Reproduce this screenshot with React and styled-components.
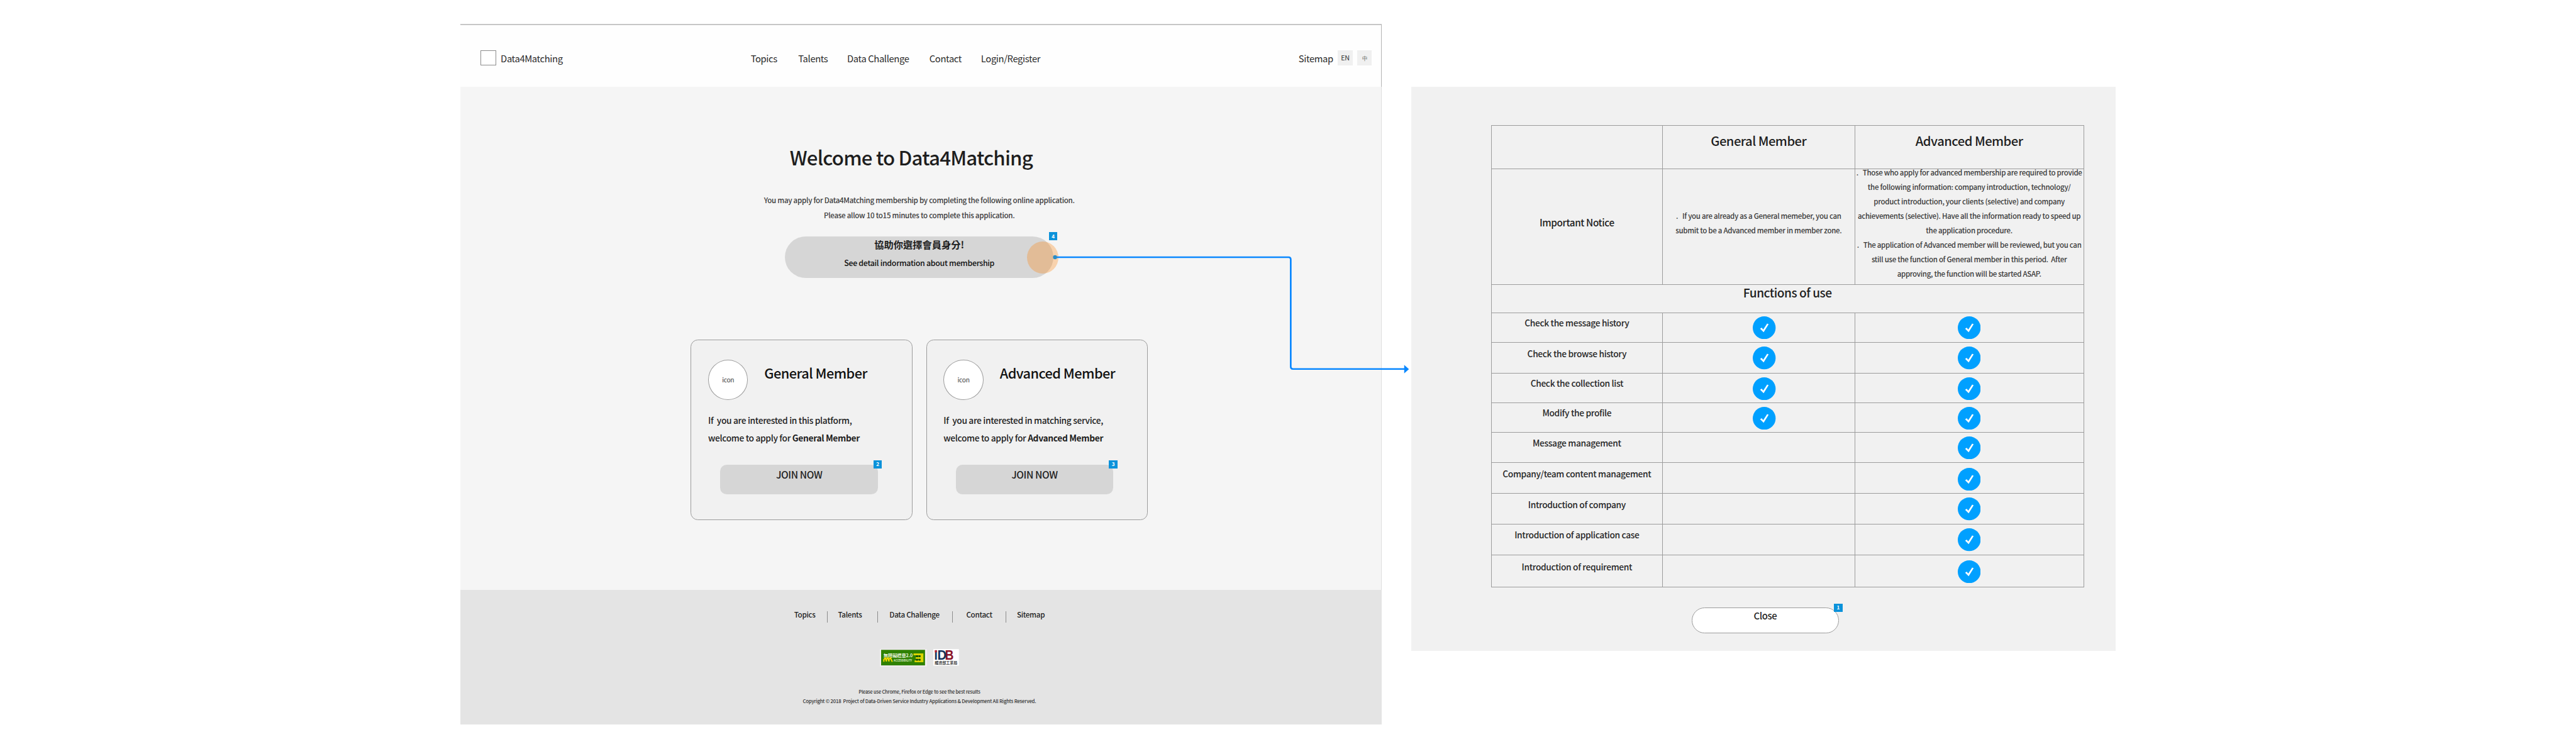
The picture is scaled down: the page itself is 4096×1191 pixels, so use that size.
import React from "react";
import styled, { createGlobalStyle } from "styled-components";

// Design units are scaled once, here, to the size of the board.
const SCALE = 0.58198;
const u = (n) => `${+(n * SCALE).toFixed(2)}px`;

const color = {
  ink: "#1e1e1e",
  soft: "#3c3c3c",
  line: "#9c9c9c",
  button: "#d6d6d6",
  badge: "#0b92da",
  check: "#00a0ff",
  flow: "#0a88ff",
};

const GlobalStyle = createGlobalStyle`
  *, *::before, *::after { box-sizing: border-box; letter-spacing: -0.025em; }
  svg text { letter-spacing: 0; }
  body {
    margin: 0;
    background: #fff;
    font-family: "Noto Sans CJK TC", "Open Sans", sans-serif;
    color: ${color.ink};
  }
  p, h1, h2, h3 { margin: 0; font-weight: inherit; }
`;

const Board = styled.div`
  position: relative;
  display: flex;
  align-items: flex-start;
  width: 4096px;
  height: 1191px;
  padding-left: ${u(1258)};
  overflow: hidden;
`;

/* ---------- page frame ---------- */

const Page = styled.div`
  display: flex;
  flex-direction: column;
  flex: none;
  width: ${u(2517)};
  height: ${u(1914)};
  margin-top: ${u(66)};
`;

const Header = styled.header`
  display: flex;
  align-items: center;
  flex: none;
  height: ${u(171)};
  padding: ${u(10)} ${u(25)} 0 ${u(55)};
  border-top: 2px solid #c6c6c6;
  border-right: 1px solid #b4b4b4;
  background: #fefefe;
  font-size: ${u(25.4)};
  color: #2a2a2a;
  white-space: nowrap;
`;

const Brand = styled.div`
  display: flex;
  align-items: center;
  gap: ${u(12)};
  width: ${u(738)};
`;

const LogoBox = styled.span`
  width: ${u(43)};
  height: ${u(42)};
  border: 1px solid #8c8c8c;
  background: #fff;
`;

const Nav = styled.nav`
  display: flex;
`;

const NavLink = styled.span`
  width: ${(p) => u(p.$slot)};
`;

const Tools = styled.div`
  display: flex;
  align-items: center;
  gap: ${u(13)};
  margin-left: auto;
`;

const Chip = styled.span`
  display: flex;
  align-items: center;
  justify-content: center;
  width: ${u(40)};
  height: ${u(41)};
  background: #f0f0f0;
  font-size: ${(p) => u(p.$size)};
  color: ${(p) => p.$tone};
  line-height: 1;
`;

const Main = styled.main`
  display: flex;
  flex-direction: column;
  align-items: center;
  flex: none;
  height: ${u(1375)};
  padding: ${u(158.5)} ${u(8)} 0 0;
  border-right: 1px solid #dedede;
  background: #f5f5f5;
  white-space: pre;
`;

const Title = styled.h1`
  padding-right: ${u(44)};
  font-size: ${u(53.6)};
  font-weight: 500;
  line-height: ${u(70)};
`;

const Lead = styled.p`
  margin-top: ${u(62.8)};
  font-size: ${u(19.9)};
  font-weight: 500;
  line-height: ${u(40.3)};
  text-align: center;
  color: ${color.soft};
`;

const Pill = styled.div`
  position: relative;
  display: flex;
  flex-direction: column;
  align-items: center;
  gap: ${u(10.4)};
  width: ${u(733.5)};
  height: ${u(113.3)};
  margin-top: ${u(37.3)};
  padding-top: ${u(2)};
  border-radius: ${u(57)};
  background: ${color.button};
`;

const PillTitle = styled.span`
  font-size: ${u(26.2)};
  font-weight: 700;
  letter-spacing: 0;
  line-height: ${u(40)};
`;

const PillText = styled.span`
  font-size: ${u(21.3)};
  font-weight: 500;
  line-height: ${u(40)};
  color: #111;
`;

const Hotspot = styled.span`
  position: absolute;
  top: ${u(13)};
  left: ${u(661)};
  width: ${u(86)};
  height: ${u(88)};
  border-radius: 50%;
  background: rgba(255, 130, 7, 0.3);
`;

const Badge = styled.span`
  position: absolute;
  top: ${(p) => u(p.$top)};
  right: ${(p) => u(p.$right)};
  display: flex;
  align-items: center;
  justify-content: center;
  width: ${u(22.7)};
  height: ${u(22.7)};
  background: ${color.badge};
  color: #fff;
  font-size: ${u(14)};
  font-weight: 700;
  line-height: 1;
  letter-spacing: 0;
`;

const Cards = styled.div`
  display: flex;
  gap: ${u(37.8)};
  margin-top: ${u(168.2)};
`;

const Card = styled.section`
  width: ${u(605.4)};
  height: ${u(493.7)};
  padding: ${u(53)} 0 0 ${u(45.8)};
  border: 1px solid ${color.line};
  border-radius: ${u(20)};
  background: #f1f1f1;
`;

const CardHead = styled.div`
  display: flex;
  align-items: flex-start;
  gap: ${u(44.5)};
`;

const IconCircle = styled.span`
  display: flex;
  align-items: center;
  justify-content: center;
  width: ${u(109)};
  height: ${u(110)};
  border: 1px solid ${color.line};
  border-radius: 50%;
  background: #fff;
  font-size: ${u(17.5)};
  color: ${color.soft};
`;

const CardTitle = styled.h2`
  margin-top: ${u(11)};
  font-size: ${u(37.3)};
  font-weight: 500;
  line-height: ${u(50)};
  color: #111;
`;

const CardText = styled.p`
  margin-top: ${u(33.9)};
  font-size: ${u(23.7)};
  font-weight: 500;
  line-height: ${u(46.8)};
`;

const JoinButton = styled.div`
  position: relative;
  width: ${u(431)};
  height: ${u(81.2)};
  margin: ${u(50)} 0 0 ${u(33)};
  padding-top: ${u(7.7)};
  border-radius: ${u(18)};
  background: ${color.button};
  font-size: ${u(26.6)};
  font-weight: 500;
  line-height: ${u(40)};
  text-align: center;
`;

/* ---------- footer ---------- */

const Footer = styled.footer`
  display: flex;
  flex-direction: column;
  align-items: center;
  flex: none;
  height: ${u(368)};
  padding: ${u(51)} ${u(9)} 0 0;
  background: #e4e4e4;
  white-space: pre;
`;

const FooterLinks = styled.div`
  display: flex;
  height: ${u(38)};
  font-size: ${u(20)};
  font-weight: 500;
  line-height: ${u(30)};
`;

const Divider = styled.span`
  width: 1px;
  height: ${u(30)};
  margin: ${u(8)} ${(p) => u(p.$after)} 0 ${(p) => u(p.$before)};
  background: #8c8c8c;
`;

const Logos = styled.div`
  display: flex;
  align-items: flex-start;
  gap: ${u(17.5)};
  height: ${u(48)};
  margin-top: ${u(71.5)};
`;

const LogoArt = styled.svg`
  display: block;
  width: ${(p) => u(p.$w)};
  height: ${(p) => u(p.$h)};
  overflow: visible;
`;

const Legal = styled.p`
  margin-top: ${(p) => u(p.$gap)};
  font-size: ${(p) => u(p.$size)};
  font-weight: 500;
  line-height: ${u(26.7)};
  color: #333;
`;

/* ---------- comparison panel ---------- */

const Panel = styled.aside`
  flex: none;
  width: ${u(1924)};
  height: ${u(1541)};
  margin: ${u(237)} 0 0 ${u(81)};
  padding: ${u(105)} 0 0 ${u(217.5)};
  background: #f1f1f1;
  white-space: pre;
`;

const Table = styled.div`
  width: ${u(1620.5)};
  border-top: 1px solid ${color.line};
  border-left: 1px solid ${color.line};
`;

const Row = styled.div`
  display: grid;
  grid-template-columns: ${(p) => (p.$full ? "1fr" : `${u(468)} ${u(525)} 1fr`)};
  height: ${(p) => u(p.$h)};
`;

const Cell = styled.div`
  display: flex;
  justify-content: center;
  align-items: ${(p) => (p.$middle ? "center" : "flex-start")};
  min-width: 0;
  min-height: 0;
  padding: ${(p) => u(p.$top || 0)} 0 ${(p) => u(p.$bottom || 0)} ${(p) => u(p.$left || 0)};
  border-right: 1px solid ${color.line};
  border-bottom: 1px solid ${color.line};
`;

const HeadText = styled.h3`
  font-size: ${(p) => u(p.$size)};
  font-weight: 500;
  line-height: ${(p) => u(p.$line)};
`;

const NoticeLabel = styled.span`
  font-size: ${u(26.3)};
  font-weight: 500;
  line-height: ${u(40)};
`;

const NoticeText = styled.p`
  font-size: ${u(19.7)};
  font-weight: 500;
  line-height: ${u(39.4)};
  text-align: center;
  color: #3a3a3a;
`;

const RowLabel = styled.span`
  font-size: ${u(23.7)};
  font-weight: 500;
  line-height: ${u(40)};
  color: #282828;
`;

const CheckArt = styled.svg`
  display: block;
  width: ${u(62.5)};
  height: ${u(62.5)};
`;

const CloseButton = styled.div`
  position: relative;
  width: ${u(403)};
  height: ${u(70)};
  margin: ${u(55.6)} 0 0 ${u(548)};
  border: 1px solid ${color.line};
  border-radius: ${u(35)};
  background: #fff;
  font-size: ${u(25.5)};
  font-weight: 500;
  line-height: ${u(42)};
  text-align: center;
`;

const FlowLine = styled.svg`
  position: absolute;
  top: ${u(640)};
  left: ${u(2870)};
  width: ${u(1000)};
  height: ${u(400)};
  pointer-events: none;
`;

/* ---------- data ---------- */

const NAV = [
  ["Topics", 130.1],
  ["Talents", 133.5],
  ["Data Challenge", 224.7],
  ["Contact", 141],
  ["Login/Register", 170],
];

const CARDS = [
  { name: "General Member", line: "If  you are interested in this platform,", badge: "2" },
  { name: "Advanced Member", line: "If  you are interested in matching service,", badge: "3" },
];

const NOTICE_GENERAL = [
  ".   If you are already as a General memeber, you can",
  "submit to be a Advanced member in member zone.",
];

const NOTICE_ADVANCED = [
  ".   Those who apply for advanced membership are required to provide",
  "the following information: company introduction, technology/",
  "product introduction, your clients (selective) and company",
  "achievements (selective). Have all the information ready to speed up",
  "the application procedure.",
  ".   The application of Advanced member will be reviewed, but you can",
  "still use the function of General member in this period.  After",
  "approving, the function will be started ASAP.",
];

const FEATURES = [
  { label: "Check the message history", h: 81, text: 7.7, mark: 8.2, general: true },
  { label: "Check the browse history", h: 84, text: 10.5, mark: 11.1, general: true },
  { label: "Check the collection list", h: 80.7, text: 7, mark: 9.8, general: true },
  { label: "Modify the profile", h: 80.3, text: 7.4, mark: 10.6, general: true },
  { label: "Message management", h: 84, text: 9.7, mark: 10.3 },
  { label: "Company/team content management", h: 84, text: 9.4, mark: 13.2 },
  { label: "Introduction of company", h: 83, text: 9, mark: 10.4 },
  { label: "Introduction of application case", h: 84.5, text: 8.7, mark: 11.8 },
  { label: "Introduction of requirement", h: 87.3, text: 12.6, mark: 14.2 },
];

const Check = () => (
  <CheckArt viewBox="0 0 62 62">
    <circle cx="31" cy="31" r="31" fill={color.check} />
    <path d="M20 33.5 L24 30.5 L28.5 36 L39 19.5 L43 21.5 L29.5 43 Z" fill="#fff" />
  </CheckArt>
);

const AccessLogo = () => (
  <LogoArt $w={128.5} $h={48} viewBox="0 0 128.5 48">
    <rect width="128.5" height="48" fill="#f3eef2" />
    <rect x="3.5" y="2.2" width="120" height="42.6" fill="#2f8102" />
    <text x="10" y="21.5" fontSize="12.5" fontWeight="700" fill="#e4f0dc" textLength="80">無障礙標章2.0</text>
    <path d="M11 35 V29 L15 24 L18 34 V28 L22 24 L25 34 V28 L29 24 L34 35" fill="none" stroke="#f5d800" strokeWidth="3.4" />
    <text x="38" y="34.5" fontSize="9" fontWeight="700" fill="#dcebd2" textLength="50" lengthAdjust="spacingAndGlyphs">ACCESSIBILITY</text>
    <path d="M92 12 H119 V36 H95 V31 H111 V27 H98 V22 H111 V17 H92 Z" fill="#d9d400" />
    <path d="M99 17 h5 v5 h-5z M99 27 h5 v5 h-5z M107 17 h4 v5 h-4z M107 27 h4 v5 h-4z" fill="#12400a" />
  </LogoArt>
);

const IdbLogo = () => (
  <LogoArt $w={70} $h={45.5} viewBox="0 0 70 45.5">
    <rect width="70" height="45.5" fill="#fdfdfd" />
    <g fontFamily="Liberation Sans, sans-serif" fontWeight="700" fontSize="36.5">
      <text x="2.5" y="29.3" fill="#14335c" textLength="9" lengthAdjust="spacingAndGlyphs">I</text>
      <text x="32" y="29.3" fill="#8a1228" textLength="24" lengthAdjust="spacingAndGlyphs">B</text>
      <text x="11" y="29.3" fill="#14335c" textLength="25" lengthAdjust="spacingAndGlyphs">D</text>
    </g>
    <rect x="4.3" y="3.2" width="5.6" height="6" fill="#b01c30" />
    <text x="4" y="41.5" fontSize="10.3" fontWeight="700" fill="#333">經濟部工業局</text>
  </LogoArt>
);

export default function App() {
  return (
    <>
      <GlobalStyle />
      <Board>
        <Page>
          <Header>
            <Brand>
              <LogoBox />
              Data4Matching
            </Brand>
            <Nav>
              {NAV.map(([label, slot]) => (
                <NavLink key={label} $slot={slot}>{label}</NavLink>
              ))}
            </Nav>
            <Tools>
              Sitemap
              <Chip $size={18.5} $tone="#333">EN</Chip>
              <Chip $size={14.5} $tone="#666">中</Chip>
            </Tools>
          </Header>

          <Main>
            <Title>Welcome to Data4Matching</Title>
            <Lead>
              You may apply for Data4Matching membership by completing the following online application.
              <br />
              Please allow 10 to15 minutes to complete this application.
            </Lead>
            <Pill>
              <PillTitle>協助你選擇會員身分!</PillTitle>
              <PillText>See detail indormation about membership</PillText>
              <Hotspot />
              <Badge $top={-12} $right={-10.5}>4</Badge>
            </Pill>
            <Cards>
              {CARDS.map((card) => (
                <Card key={card.name}>
                  <CardHead>
                    <IconCircle>icon</IconCircle>
                    <CardTitle>{card.name}</CardTitle>
                  </CardHead>
                  <CardText>
                    {card.line}
                    <br />
                    welcome to apply for <b>{card.name}</b>
                  </CardText>
                  <JoinButton>
                    JOIN NOW
                    <Badge $top={-12.6} $right={-10.8}>{card.badge}</Badge>
                  </JoinButton>
                </Card>
              ))}
            </Cards>
          </Main>

          <Footer>
            <FooterLinks>
              Topics
              <Divider $before={31} $after={29} />
              Talents
              <Divider $before={41.5} $after={32} />
              Data Challenge
              <Divider $before={34.5} $after={37} />
              Contact
              <Divider $before={36.5} $after={29} />
              Sitemap
            </FooterLinks>
            <Logos>
              <AccessLogo />
              <IdbLogo />
            </Logos>
            <Legal $gap={55.5} $size={12.9}>Please use Chrome, Firefox or Edge to see the best results</Legal>
            <Legal $gap={0} $size={13.3}>
              Copyright © 2018  Project of Data-Driven Service Industry Applications &amp; Development All Rights Reserved.
            </Legal>
          </Footer>
        </Page>

        <Panel>
          <Table>
            <Row $h={118.5}>
              <Cell />
              <Cell $top={15.5}><HeadText $size={34.7} $line={50}>General Member</HeadText></Cell>
              <Cell $top={15.5}><HeadText $size={34.7} $line={50}>Advanced Member</HeadText></Cell>
            </Row>
            <Row $h={316}>
              <Cell $middle $bottom={24}><NoticeLabel>Important Notice</NoticeLabel></Cell>
              <Cell $middle $bottom={18}><NoticeText>{NOTICE_GENERAL.join("\n")}</NoticeText></Cell>
              <Cell $middle $bottom={18}><NoticeText>{NOTICE_ADVANCED.join("\n")}</NoticeText></Cell>
            </Row>
            <Row $full $h={77.3}>
              <Cell><HeadText $size={32.8} $line={40}>Functions of use</HeadText></Cell>
            </Row>
            {FEATURES.map((f) => (
              <Row key={f.label} $h={f.h}>
                <Cell $top={f.text}><RowLabel>{f.label}</RowLabel></Cell>
                <Cell $top={f.mark} $left={32}>{f.general && <Check />}</Cell>
                <Cell $top={f.mark}><Check /></Cell>
              </Row>
            ))}
          </Table>
          <CloseButton>
            Close
            <Badge $top={-12.5} $right={-11}>1</Badge>
          </CloseButton>
        </Panel>

        <FlowLine viewBox="2870 640 1000 400">
          <path
            d="M2883 703.6 H3521 Q3527 703.6 3527 709.6 V1003 Q3527 1009 3533 1009 H3839"
            fill="none"
            stroke={color.flow}
            strokeWidth="4.6"
          />
          <circle cx="2883" cy="703.6" r="5.5" fill="#2d8cc4" />
          <path d="M3837 998 L3850 1009.5 L3837 1021 Z" fill={color.flow} />
        </FlowLine>
      </Board>
    </>
  );
}
